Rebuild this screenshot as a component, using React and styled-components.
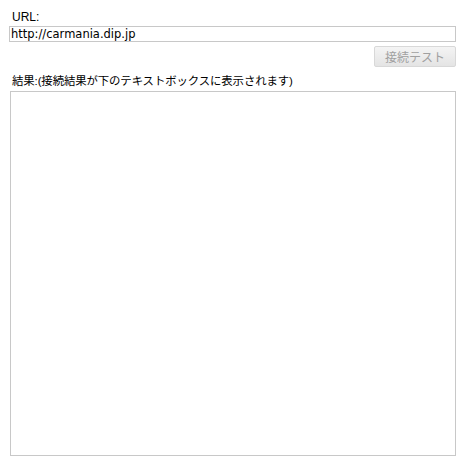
import styled, { createGlobalStyle } from "styled-components";

const GlobalStyle = createGlobalStyle`
    html, body {
        margin: 0;
        padding: 0;
        background: #ffffff;
    }
    body {
        font-family: "Liberation Sans", "Noto Sans CJK JP", sans-serif;
        font-size: 12px;
        color: #000000;
    }
`;

export default function App() {
    return (
        <>
            <GlobalStyle />
            <Page>
                <Label>URL:</Label>
                <UrlInput defaultValue="http://carmania.dip.jp" readOnly />
                <ButtonRow>
                    <TestButton disabled>接続テスト</TestButton>
                </ButtonRow>
                <Label $tight>結果:(接続結果が下のテキストボックスに表示されます)</Label>
                <ResultBox readOnly />
            </Page>
        </>
    );
}

const Page = styled.div`
    width: 447px;
    padding: 9px 9px 0 9px;
    display: flex;
    flex-direction: column;
`;

const Label = styled.div`
    height: 16px;
    line-height: 16px;
    padding-left: 3px;
    font-size: ${(props) => (props.$tight ? "11.4px" : "12px")};
    letter-spacing: ${(props) => (props.$tight ? "-0.1px" : "0")};
    white-space: nowrap;
`;

const UrlInput = styled.input`
    box-sizing: border-box;
    width: 447px;
    height: 16px;
    margin: 1px 0 0 0;
    padding: 0 1px;
    border: 1px solid #c8c8c8;
    font-family: "DejaVu Sans", "Noto Sans CJK JP", sans-serif;
    font-size: 11.5px;
    line-height: 14px;
    color: #000000;
    outline: none;
`;

const ButtonRow = styled.div`
    display: flex;
    justify-content: flex-end;
    padding: 4px 0 6px 0;
`;

const TestButton = styled.button`
    box-sizing: border-box;
    width: 82px;
    height: 21px;
    padding: 0;
    border: 1px solid #d8d8d8;
    border-radius: 2px;
    background: linear-gradient(#f4f4f4, #e4e4e4);
    color: #a0a0a0;
    font-family: "Noto Sans CJK JP", sans-serif;
    font-size: 12px;
`;

const ResultBox = styled.textarea`
    box-sizing: border-box;
    width: 446px;
    height: 365px;
    margin: 2px 0 0 1px;
    border: 1px solid #c8c8c8;
    resize: none;
    outline: none;
`;
